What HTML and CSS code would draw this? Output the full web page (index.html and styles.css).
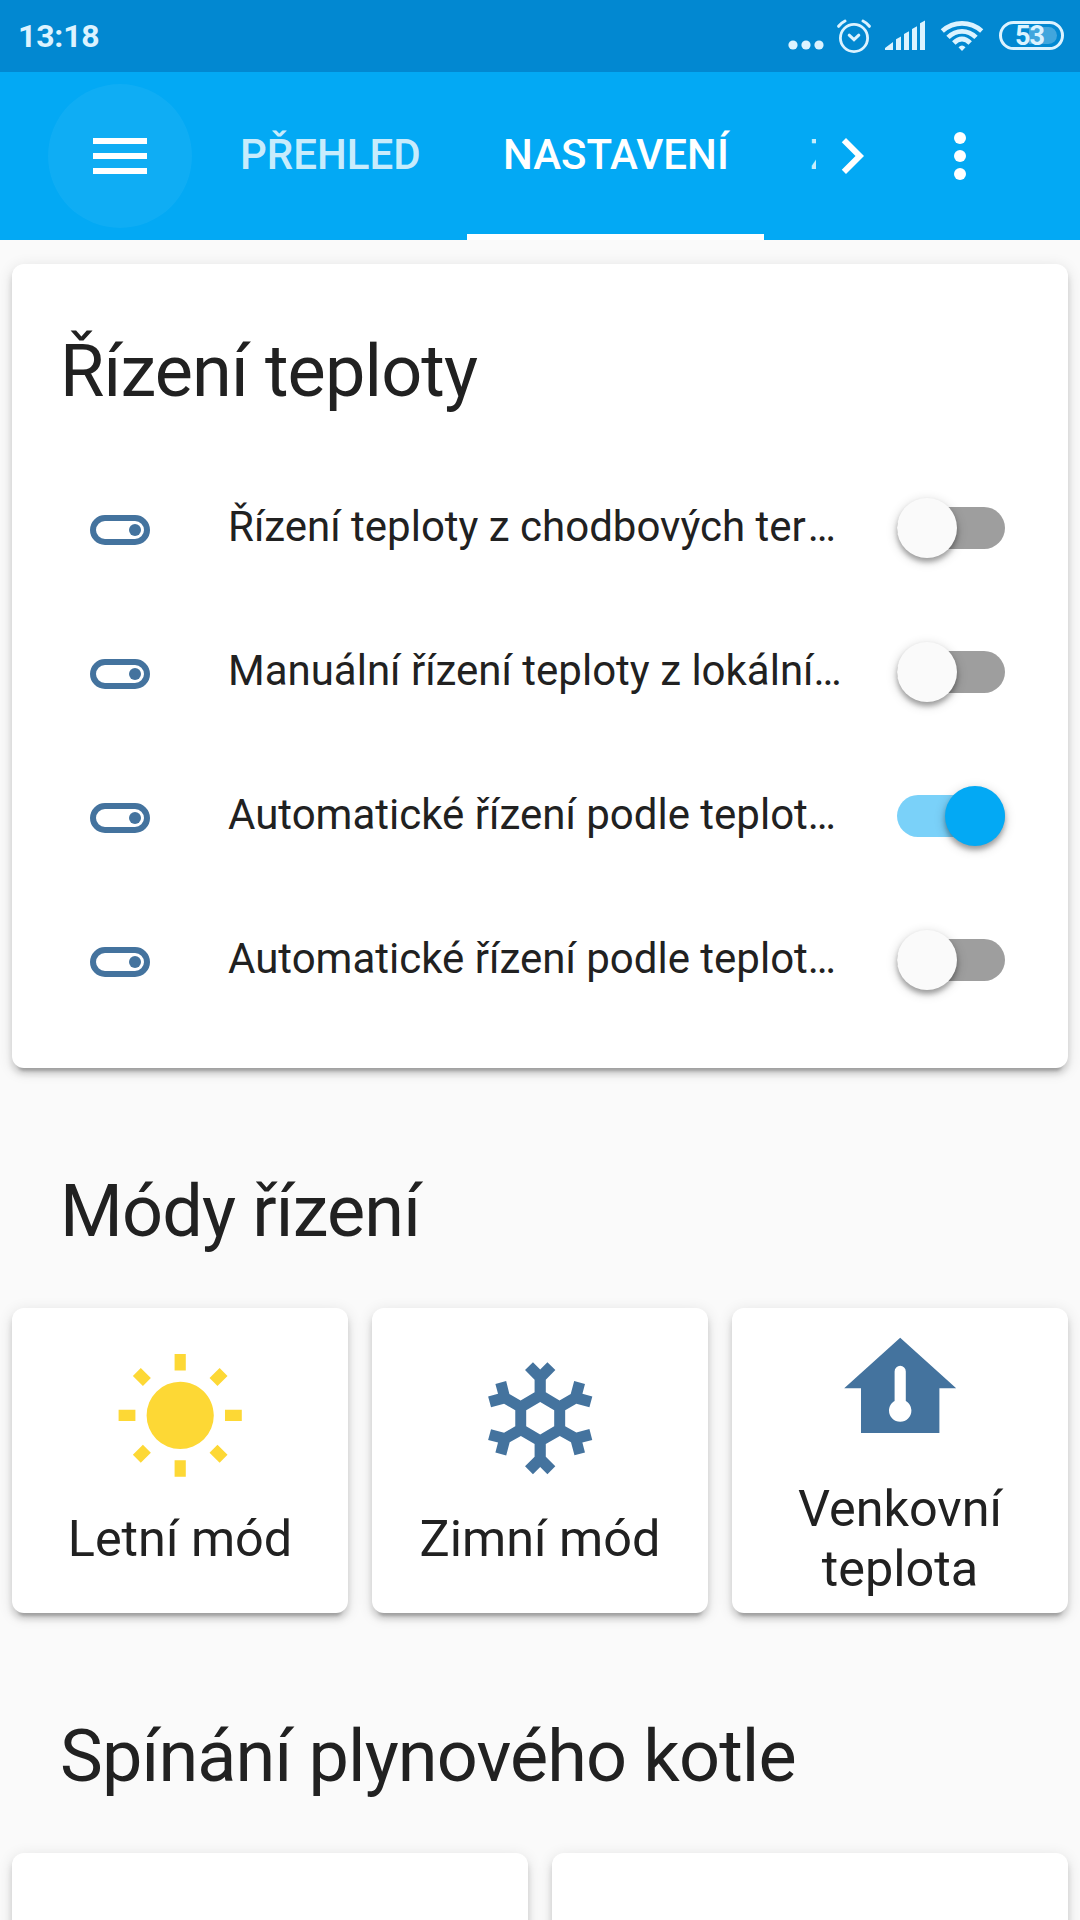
FILE: index.html
```html
<!DOCTYPE html>
<html lang="cs">
<head>
<meta charset="utf-8">
<title>Nastavení</title>
<link rel="stylesheet" href="styles.css">
</head>
<body>
<svg class="defs" width="0" height="0" aria-hidden="true">
  <symbol id="toggle-outline" viewBox="0 0 24 24">
    <rect x="3" y="8" width="18" height="8" rx="4" fill="none" stroke="currentColor" stroke-width="2"/>
    <circle cx="17" cy="12" r="2" fill="currentColor"/>
  </symbol>
</svg>

<div class="status-bar">
  <span class="clock">13:18</span>
  <div class="status-icons">
    <svg class="ic-more" width="36" height="10" viewBox="0 0 36 10"><circle cx="5" cy="5" r="4.6"/><circle cx="18" cy="5" r="4.6"/><circle cx="31" cy="5" r="4.6"/></svg>
    <svg class="ic-alarm" width="36" height="36" viewBox="0 0 36 36"><g fill="none" stroke="currentColor" stroke-width="2.8"><circle cx="18" cy="20" r="13.6"/><path stroke-width="3" stroke-linecap="round" d="M13.2 17.2L18 21.6L22.8 17.2M2.6 8.3Q5.5 4.6 9 3M33.4 8.3Q30.5 4.6 27 3"/></g></svg>
    <svg class="ic-signal" width="40" height="30" viewBox="0 0 40 30"><path d="M0 30V28L8 22V30ZM11 30V19.3L16 16.5V30ZM19 30V14L24 11.3V30ZM27 30V9L32 6.2V30ZM35 30V3.2L40 .5V30Z"/></svg>
    <svg class="ic-wifi" width="44" height="32" viewBox="0 0 44 32"><g fill="none" stroke="currentColor" stroke-width="4.8"><path d="M2.3 12Q11 4.4 22 4.4T41.7 12"/><path d="M8 18.4Q14.3 12.3 22 12.3T36 18.4"/><path d="M13.8 24Q17.7 20 22 20T30.2 24"/></g><path d="M18.5 28.2Q22 24.8 25.5 28.2L22 32Z"/></svg>
    <div class="battery"><span class="battery-level"></span><span class="battery-text">53</span></div>
  </div>
</div>

<header class="app-bar">
  <button class="menu-btn" aria-label="Menu">
    <svg width="72" height="72" viewBox="0 0 24 24"><path d="M3 18h18v-2H3v2zm0-5h18v-2H3v2zm0-7v2h18V6H3z"/></svg>
  </button>
  <nav class="tabs">
    <a class="tab">Přehled</a>
    <a class="tab active">Nastavení</a>
    <a class="tab next">Z</a>
  </nav>
  <svg class="chevron" width="72" height="72" viewBox="0 0 24 24"><path d="M10 6L8.59 7.41 13.17 12l-4.58 4.59L10 18l6-6z"/></svg>
  <svg class="overflow" width="72" height="72" viewBox="0 0 24 24"><circle cx="12" cy="6" r="2"/><circle cx="12" cy="12" r="2"/><circle cx="12" cy="18" r="2"/></svg>
</header>

<main class="view">
  <section class="card entities">
    <h1 class="heading">Řízení teploty</h1>
    <div class="row"><svg class="row-icon"><use href="#toggle-outline"/></svg><span class="name">Řízení teploty z chodbových ter<span class="ellipsis">…</span></span><span class="toggle"></span></div>
    <div class="row"><svg class="row-icon"><use href="#toggle-outline"/></svg><span class="name">Manuální řízení teploty z lokální…</span><span class="toggle"></span></div>
    <div class="row"><svg class="row-icon"><use href="#toggle-outline"/></svg><span class="name">Automatické řízení podle teplot…</span><span class="toggle on"></span></div>
    <div class="row"><svg class="row-icon"><use href="#toggle-outline"/></svg><span class="name">Automatické řízení podle teplot…</span><span class="toggle"></span></div>
  </section>

  <h1 class="heading section">Módy řízení</h1>
  <div class="grid three">
    <div class="card button">
      <svg class="big-icon sun" viewBox="0 0 24 24"><path d="M3.55,18.54L4.96,19.95L6.76,18.16L5.34,16.74M11,22.45C11.32,22.45 13,22.45 13,22.45V19.5H11M12,5.5A6,6 0 0,0 6,11.5A6,6 0 0,0 12,17.5A6,6 0 0,0 18,11.5C18,8.18 15.31,5.5 12,5.5M20,12.5H23V10.5H20M17.24,18.16L19.04,19.95L20.45,18.54L18.66,16.74M20.45,4.46L19.04,3.05L17.24,4.84L18.66,6.26M13,0.55H11V3.5H13M4,10.5H1V12.5H4M6.76,4.84L4.96,3.05L3.55,4.46L5.34,6.26L6.76,4.84Z"/></svg>
      <span>Letní mód</span>
    </div>
    <div class="card button">
      <svg class="big-icon" viewBox="0 0 24 24"><path d="M20.79,13.95L18.46,14.57L16.46,13.44V10.56L18.46,9.43L20.79,10.05L21.31,8.12L19.54,7.65L20,5.88L18.07,5.36L17.45,7.69L15.45,8.82L13,7.38V5.12L14.71,3.41L13.29,2L12,3.29L10.71,2L9.29,3.41L11,5.12V7.38L8.5,8.82L6.5,7.69L5.92,5.36L4,5.88L4.47,7.65L2.7,8.12L3.22,10.05L5.55,9.43L7.55,10.56V13.45L5.55,14.58L3.22,13.96L2.7,15.89L4.47,16.36L4,18.12L5.93,18.64L6.55,16.31L8.55,15.18L11,16.62V18.88L9.29,20.59L10.71,22L12,20.71L13.29,22L14.7,20.59L13,18.88V16.62L15.5,15.17L17.5,16.3L18.12,18.63L20,18.12L19.53,16.35L21.3,15.88L20.79,13.95M9.5,10.56L12,9.11L14.5,10.56V13.44L12,14.89L9.5,13.44V10.56Z"/></svg>
      <span>Zimní mód</span>
    </div>
    <div class="card button">
      <svg class="big-icon" viewBox="0 0 24 24"><path fill-rule="evenodd" d="M12,3L2,12H5V20H19V12H22L12,3M12,8A1,1 0 0,1 13,9V14.27C13.6,14.61 14,15.26 14,16A2,2 0 0,1 12,18A2,2 0 0,1 10,16C10,15.26 10.4,14.61 11,14.27V9A1,1 0 0,1 12,8Z"/></svg>
      <span>Venkovní teplota</span>
    </div>
  </div>

  <h1 class="heading section">Spínání plynového kotle</h1>
  <div class="grid two">
    <div class="card button"></div>
    <div class="card button"></div>
  </div>
</main>
</body>
</html>
```
FILE: styles.css
```css
* { box-sizing: border-box; }

body {
  margin: 0;
  height: 1920px;
  overflow: hidden;
  background: #fafafa;
  color: #212121;
  font-family: Roboto, "Noto Sans", sans-serif;
  font-size: 42px;
}

svg { display: block; fill: currentColor; flex: none; }
.defs { position: absolute; }

.status-bar {
  display: flex;
  justify-content: space-between;
  height: 72px;
  padding: 0 16px 0 18px;
  background: #0288d1;
  color: #dcf3ff;
}
.clock { font-size: 32px; font-weight: 700; line-height: 73px; letter-spacing: -.2px; }
.status-icons { display: flex; align-items: flex-start; }
.ic-more { margin: 40px 12px 0 0; }
.ic-alarm { margin: 18px 13px 0 0; }
.ic-signal { margin: 20px 15px 0 0; }
.ic-wifi { margin: 19px 15px 0 0; }
.battery {
  position: relative;
  width: 65px;
  height: 29px;
  margin-top: 21px;
  border: 3px solid #dcf3ff;
  border-radius: 15px;
}
.battery-level {
  position: absolute;
  top: 3px;
  right: 4px;
  width: 28px;
  height: 17px;
  border-radius: 0 9px 9px 0;
  background: #41a6dd;
}
.battery-text {
  position: absolute;
  inset: 0 4px 0 0;
  text-align: center;
  font-size: 27px;
  font-weight: 700;
  line-height: 24px;
  letter-spacing: -1px;
}

.app-bar {
  display: flex;
  align-items: center;
  height: 168px;
  padding: 0 48px;
  background: #03a9f4;
  color: #fff;
}
.menu-btn {
  display: flex;
  align-items: center;
  justify-content: center;
  width: 144px;
  height: 144px;
  padding: 0;
  border: 0;
  border-radius: 50%;
  background: rgba(255, 255, 255, .05);
  color: #fff;
}
.tabs {
  display: flex;
  width: 612px;
  height: 168px;
  margin-left: 12px;
  overflow: hidden;
}
.tab {
  flex: none;
  height: 168px;
  padding: 0 36px;
  border-bottom: 6px solid transparent;
  line-height: 165px;
  font-weight: 500;
  text-transform: uppercase;
  color: rgba(255, 255, 255, .8);
}
.tab.active { width: 297px; color: #fff; border-color: #fff; }
.tab:first-child { width: 263px; }
.tab.next { padding-left: 46px; }
.chevron { margin-right: 36px; }

.view { padding: 24px 12px 0; }
.card {
  background: #fff;
  border-radius: 12px;
  box-shadow: 0 6px 6px 0 rgba(0, 0, 0, .14), 0 3px 15px 0 rgba(0, 0, 0, .12), 0 9px 3px -6px rgba(0, 0, 0, .2);
}
.heading {
  margin: 0;
  padding-bottom: 36px;
  font-size: 72px;
  font-weight: 400;
  line-height: 120px;
  letter-spacing: -.012em;
}
.heading.section { padding: 84px 48px 36px; }

.entities {
  height: 804px;
  padding: 48px;
}
.row { display: flex; align-items: center; height: 120px; margin-bottom: 24px; }
.row-icon { width: 72px; height: 72px; margin: 4px 72px 0 24px; color: #44739e; }
.name { flex: 1; white-space: nowrap; line-height: 60px; padding-bottom: 2px; }
.ellipsis { margin-left: 2px; }
.toggle {
  position: relative;
  width: 108px;
  height: 42px;
  margin-right: 15px;
  border-radius: 21px;
  background: #9e9e9e;
}
.toggle::before {
  content: "";
  position: absolute;
  left: 0;
  top: -9px;
  width: 60px;
  height: 60px;
  border-radius: 50%;
  background: #fafafa;
  box-shadow: 0 3px 12px 0 rgba(0, 0, 0, .2), 0 4px 5px rgba(0, 0, 0, .28);
}
.toggle.on { background: #7ad1f9; }
.toggle.on::before { left: 48px; background: #03a9f4; }

.grid { display: grid; gap: 24px; }
.three { grid-template-columns: repeat(3, 1fr); }
.two { grid-template-columns: repeat(2, 1fr); }
.button {
  display: flex;
  flex-direction: column;
  align-items: center;
  justify-content: center;
  height: 305px;
  padding: 13px 13px 14px;
  text-align: center;
  font-size: 50.4px;
  line-height: 60px;
}
.big-icon { width: 134.4px; height: 134.4px; margin-bottom: 23px; color: #44739e; }
.big-icon.sun { color: #fdd835; }
```
